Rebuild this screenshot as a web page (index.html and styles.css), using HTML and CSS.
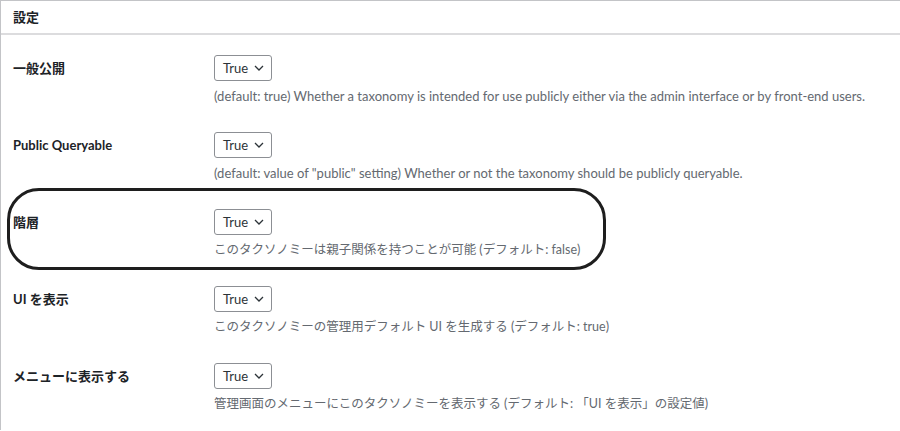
FILE: index.html
```html
<!DOCTYPE html>
<html lang="ja">
<head>
<meta charset="utf-8">
<title>設定</title>
<link rel="stylesheet" href="styles.css">
</head>
<body>
<section class="panel">
  <h2 class="panel-title">設定</h2>
  <div class="panel-body">
    <div class="row">
      <div class="label">一般公開</div>
      <div class="field">
        <div class="select"><span>True</span><svg class="chev" viewBox="0 0 10 6" width="10" height="6"><path d="M1 1l4 4 4-4" fill="none" stroke="#2c3338" stroke-width="1.3"/></svg></div>
        <p class="desc">(default: true) Whether a taxonomy is intended for use publicly either via the admin interface or by front-end users.</p>
      </div>
    </div>
    <div class="row">
      <div class="label">Public Queryable</div>
      <div class="field">
        <div class="select"><span>True</span><svg class="chev" viewBox="0 0 10 6" width="10" height="6"><path d="M1 1l4 4 4-4" fill="none" stroke="#2c3338" stroke-width="1.3"/></svg></div>
        <p class="desc">(default: value of "public" setting) Whether or not the taxonomy should be publicly queryable.</p>
      </div>
    </div>
    <div class="row highlighted">
      <div class="label">階層</div>
      <div class="field">
        <div class="select"><span>True</span><svg class="chev" viewBox="0 0 10 6" width="10" height="6"><path d="M1 1l4 4 4-4" fill="none" stroke="#2c3338" stroke-width="1.3"/></svg></div>
        <p class="desc desc-ja">このタクソノミーは親子関係を持つことが可能 (デフォルト: false)</p>
      </div>
      <div class="annotation"></div>
    </div>
    <div class="row">
      <div class="label">UI を表示</div>
      <div class="field">
        <div class="select"><span>True</span><svg class="chev" viewBox="0 0 10 6" width="10" height="6"><path d="M1 1l4 4 4-4" fill="none" stroke="#2c3338" stroke-width="1.3"/></svg></div>
        <p class="desc desc-ja">このタクソノミーの管理用デフォルト UI を生成する (デフォルト: true)</p>
      </div>
    </div>
    <div class="row">
      <div class="label">メニューに表示する</div>
      <div class="field">
        <div class="select"><span>True</span><svg class="chev" viewBox="0 0 10 6" width="10" height="6"><path d="M1 1l4 4 4-4" fill="none" stroke="#2c3338" stroke-width="1.3"/></svg></div>
        <p class="desc desc-ja">管理画面のメニューにこのタクソノミーを表示する (デフォルト: 「UI を表示」の設定値)</p>
      </div>
    </div>
  </div>
</section>
</body>
</html>
```
FILE: styles.css
```css
html, body {
  margin: 0;
  padding: 0;
  background: #fff;
}
body {
  font-family: "Lato", "Noto Sans CJK JP", sans-serif;
  color: #1d2327;
  font-size: 13px;
}
.panel {
  border-top: 1px solid #c3c4c7;
  border-left: 1px solid #c3c4c7;
  height: 430px;
  box-sizing: border-box;
}
.panel-title {
  margin: 0;
  height: 32px;
  line-height: 32px;
  padding: 0 12px;
  font-size: 13px;
  font-weight: 700;
  border-bottom: 2px solid #dcdcde;
}
.panel-body {
  padding: 6px 12px 0;
}
.row {
  position: relative;
  display: grid;
  grid-template-columns: 201px 1fr;
  padding: 14px 0 13px;
}
.label {
  font-weight: 700;
  line-height: 26px;
  font-size: 13px;
}
.field {
  display: flex;
  flex-direction: column;
  align-items: flex-start;
}
.select {
  box-sizing: border-box;
  width: 58px;
  height: 26px;
  border: 1px solid #8c8f94;
  border-radius: 3px;
  display: flex;
  align-items: center;
  justify-content: space-between;
  padding: 0 7px 0 8px;
  color: #2c3338;
  font-size: 13px;
}
.chev { display: block; }
.desc {
  margin: 6px 0 0;
  line-height: 18px;
  color: #646970;
  font-size: 13px;
  white-space: nowrap;
}
.desc-ja {
  font-size: 12.5px;
}
.annotation {
  position: absolute;
  left: -6px;
  top: -7px;
  width: 599px;
  height: 82px;
  box-sizing: border-box;
  border: 3px solid #1e1e1e;
  border-radius: 32px;
  pointer-events: none;
}
```
